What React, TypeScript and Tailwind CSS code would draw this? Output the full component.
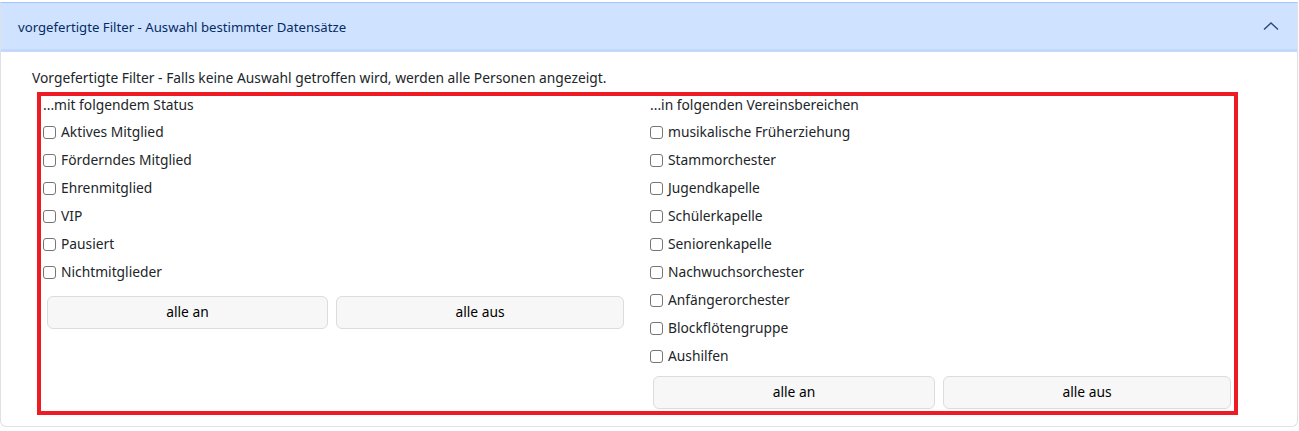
const statusItems = ['Aktives Mitglied', 'Förderndes Mitglied', 'Ehrenmitglied', 'VIP', 'Pausiert', 'Nichtmitglieder'];
const bereichItems = [
  'musikalische Früherziehung',
  'Stammorchester',
  'Jugendkapelle',
  'Schülerkapelle',
  'Seniorenkapelle',
  'Nachwuchsorchester',
  'Anfängerorchester',
  'Blockflötengruppe',
  'Aushilfen',
];

const CheckRow = ({ label }: { label: string }) => (
  <label className="flex items-center h-[28px] gap-[5px] text-[13.8px] text-[#212529]">
    <input
      type="checkbox"
      className="appearance-none m-0 w-[13px] h-[13px] border border-[#767676] rounded-[3px] bg-white shrink-0"
    />
    <span>{label}</span>
  </label>
);

const Btn = ({ children, w }: { children: string; w: string }) => (
  <button className={`${w} h-[33px] bg-[#f7f7f7] border border-[#dcdcdc] rounded-[6px] text-[13.8px] text-black`}>
    {children}
  </button>
);

export default function App() {
  return (
    <div className="w-[1299px] h-[431px] bg-white pt-[2px] font-['Segoe_UI','Noto_Sans',sans-serif]">
      <div className="w-[1298px] border border-[#dee2e6] border-t-[#9ec5fe] rounded-b-[6px] overflow-hidden">
        <div className="h-[49px] bg-[#cfe2ff] border-b-[3px] border-[#c2d9fc] flex items-center justify-between pt-[4px] pl-[17px] pr-[18px]">
          <span className="text-[13.2px] text-[#052c65]">vorgefertigte Filter - Auswahl bestimmter Datensätze</span>
          <svg width="16" height="10" viewBox="0 0 16 10" fill="none" className="-mt-[4px]">
            <polyline points="1,8.5 8,2 15,8.5" stroke="#2b4a7d" strokeWidth="1.4" />
          </svg>
        </div>
        <div className="pt-[16px] pb-[11px] pl-[31px]">
          <p className="text-[13.8px] leading-[20px] text-[#212529]">
            Vorgefertigte Filter - Falls keine Auswahl getroffen wird, werden alle Personen angezeigt.
          </p>
          <div className="mt-[4px] ml-[5px] w-[1201px] border-[4px] border-[#ed1c24] flex">
            <div className="w-[607px] pl-[2px]">
              <div className="text-[13.8px] leading-[18px] text-[#212529]">...mit folgendem Status</div>
              <div className="mt-[4px]">
                {statusItems.map((s) => (
                  <CheckRow key={s} label={s} />
                ))}
              </div>
              <div className="flex gap-[8px] mt-[10px] ml-[4px]">
                <Btn w="w-[281px]">alle an</Btn>
                <Btn w="w-[288px]">alle aus</Btn>
              </div>
            </div>
            <div className="flex-1 pl-[2px]">
              <div className="text-[13.8px] leading-[18px] text-[#212529]">...in folgenden Vereinsbereichen</div>
              <div className="mt-[4px]">
                {bereichItems.map((s) => (
                  <CheckRow key={s} label={s} />
                ))}
              </div>
              <div className="flex gap-[8px] mt-[6px] ml-[3px]">
                <Btn w="w-[282px]">alle an</Btn>
                <Btn w="w-[288px]">alle aus</Btn>
              </div>
              <div className="h-[2px]" />
            </div>
          </div>
        </div>
      </div>
    </div>
  );
}
